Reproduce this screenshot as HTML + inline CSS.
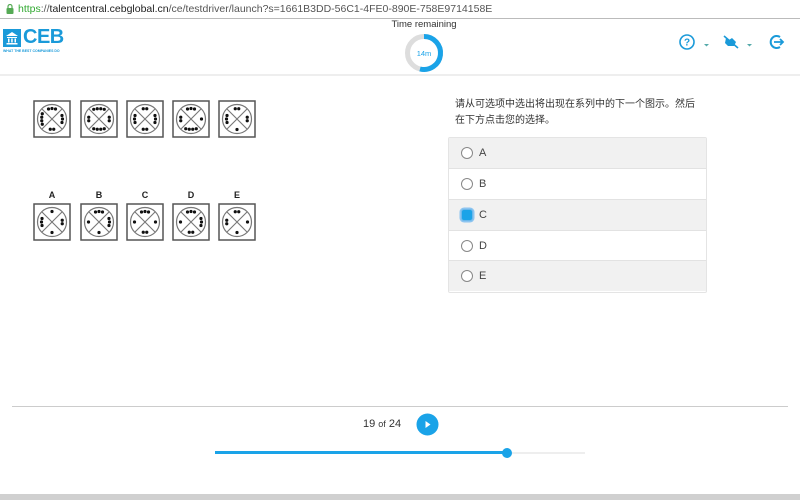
<!DOCTYPE html>
<html><head><meta charset="utf-8"><style>
body{margin:0;width:800px;height:500px;overflow:hidden;background:#fff;font-family:"Liberation Sans","Noto Sans CJK SC",sans-serif;position:relative}
.abs{position:absolute}
.opt{position:absolute;left:0;width:257px;height:30px;border-top:1px solid #e2e2e2;font-size:11px;color:#444}
.opt .r{position:absolute;left:12px;top:9px;width:10px;height:10px;border:1px solid #888;border-radius:50%;background:#fff}
.opt span{position:absolute;left:30px;top:9px}
</style></head><body>
<div class="abs" style="left:0;top:0;width:800px;height:18px;border-bottom:1px solid #bbb;background:#fff;font-size:10.5px;line-height:18px;color:#555">
<svg class="abs" style="left:6px;top:4px" width="8" height="10"><path d="M2 4V2.5a2 2 0 0 1 4 0V4" fill="none" stroke="#5a5" stroke-width="1.2"/><rect x="0.5" y="4" width="7" height="6" rx="1" fill="#5a5"/></svg>
<span class="abs" style="left:18px"><span style="color:#3a3">https</span>://<b style="color:#222;font-weight:normal">talentcentral.cebglobal.cn</b>/ce/testdriver/launch?s=1661B3DD-56C1-4FE0-890E-758E9714158E</span></div>
<div class="abs" style="left:3px;top:29px;width:18px;height:18px;background:#1a9ad9"></div>
<svg class="abs" style="left:3px;top:29px" width="18" height="18"><path d="M3 7L9 3L15 7Z M4 8h10v1H4z M5 9.5h1.5v4H5z M8.2 9.5h1.5v4H8.2z M11.5 9.5h1.5v4h-1.5z M3.5 14h11v1.5h-11z" fill="#fff"/></svg>
<div class="abs" style="left:23px;top:26px;font-size:20px;font-weight:bold;color:#1a9ad9;letter-spacing:-0.5px">CEB</div>
<div class="abs" style="left:3px;top:49px;font-size:3.5px;color:#1a9ad9;font-weight:bold">WHAT THE BEST COMPANIES DO</div>
<div class="abs" style="left:380px;top:19px;width:88px;text-align:center;font-size:9.5px;color:#333">Time remaining</div>
<svg class="abs" style="left:403px;top:32px" width="42" height="42"><circle cx="21" cy="21" r="16.5" fill="none" stroke="#ddd" stroke-width="5"/><path d="M21 4.5A16.5 16.5 0 1 1 17 37" fill="none" stroke="#1aa3e8" stroke-width="5"/><text x="21" y="24" font-size="7.5" text-anchor="middle" fill="#1aa3e8" font-family="Liberation Sans">14m</text></svg>
<svg class="abs" style="left:676px;top:32px" width="115" height="22">
<circle cx="11" cy="10" r="7" fill="none" stroke="#1a9ad9" stroke-width="1.6"/><text x="11" y="13.5" font-size="10" text-anchor="middle" fill="#1a9ad9" font-family="Liberation Sans" font-weight="bold">?</text>
<path d="M28 12h5l-2.5 2.5z" fill="#5aa"/>
<path d="M50 6l3 2 3-2 4 4-2 4h-6l-3-3z" fill="#1a9ad9"/><path d="M48 4l14 12" stroke="#1a9ad9" stroke-width="1.6"/>
<path d="M71 12h5l-2.5 2.5z" fill="#5aa"/>
<path d="M104 5a6 6 0 1 0 0 10" fill="none" stroke="#1a9ad9" stroke-width="2"/><path d="M98 10h8M104 7l3 3-3 3" fill="none" stroke="#1a9ad9" stroke-width="1.8"/>
</svg>
<div class="abs" style="left:0;top:74px;width:800px;height:2px;background:#eee"></div>
<div id="figs"></div>
<div class="abs" style="left:455px;top:97px;font-size:10px;line-height:16px;color:#333;width:250px">请从可选项中选出将出现在系列中的下一个图示。然后<br>在下方点击您的选择。</div>
<div class="abs" style="left:448px;top:137px;width:257px;height:154px;border:1px solid #e4e4e4;border-radius:2px;overflow:hidden">
<div class="opt" style="top:-1px;background:#f1f1f1"><div class="r"></div><span>A</span></div>
<div class="opt" style="top:30px;background:#fff"><div class="r"></div><span>B</span></div>
<div class="opt" style="top:61px;background:#f1f1f1"><div class="r" style="background:#1aa3e8;border-color:#6bb7ea;box-shadow:0 0 0 1.5px #8cc4f0;border-radius:3px"></div><span>C</span></div>
<div class="opt" style="top:92px;background:#fff"><div class="r"></div><span>D</span></div>
<div class="opt" style="top:122px;background:#f1f1f1"><div class="r"></div><span>E</span></div>
</div>
<div class="abs" style="left:12px;top:406px;width:776px;height:1px;background:#ccc"></div>
<div class="abs" style="left:363px;top:418px;font-size:11px;color:#333">19 <span style="font-size:9px">of</span> 24</div>
<svg class="abs" style="left:416px;top:413px" width="23" height="23"><circle cx="11.5" cy="11.5" r="11" fill="#1aa3e8"/><path d="M9.5 8v7l5-3.5z" fill="#fff"/></svg>
<div class="abs" style="left:215px;top:452px;width:370px;height:2px;background:#eee"></div>
<div class="abs" style="left:215px;top:451px;width:292px;height:3px;background:#1aa3e8"></div>
<div class="abs" style="left:502px;top:448px;width:10px;height:10px;border-radius:50%;background:#1aa3e8"></div>
<div class="abs" style="left:0;top:494px;width:800px;height:6px;background:#d0d0d0"></div>
<script>
var xs=[33,80,126,172,218];
var r1=[[3,3,2,4],[4,2,4,2],[2,3,2,3],[3,1,4,2],[2,2,1,3]];
var r2=[[1,2,1,3],[3,3,1,1],[3,1,2,1],[3,3,2,1],[2,1,1,2]];
var L=['A','B','C','D','E'];
function box(x,y,p){
 var s='<svg class="abs" style="left:'+x+'px;top:'+y+'px" width="38" height="38"><rect x="1" y="1" width="36" height="36" fill="#fff" stroke="#555" stroke-width="1.5"/><circle cx="19" cy="19" r="14.5" fill="none" stroke="#777" stroke-width="1.2"/><path d="M9 9L29 29M29 9L9 29" stroke="#777" stroke-width="1.1"/>';
 function pts(n,f){for(var i=0;i<n;i++){var o=(i-(n-1)/2)*3.5;var q=f(o);s+='<circle cx="'+q[0]+'" cy="'+q[1]+'" r="1.6" fill="#111"/>';}}
 pts(p[0],function(o){return[19+o,8.5+Math.abs(o)*0.15]});
 pts(p[1],function(o){return[29.5-Math.abs(o)*0.15,19+o]});
 pts(p[2],function(o){return[19+o,29.5-Math.abs(o)*0.15]});
 pts(p[3],function(o){return[8.5+Math.abs(o)*0.15,19+o]});
 return s+'</svg>';
}
var h='';
for(var i=0;i<5;i++){h+=box(xs[i],100,r1[i]);h+=box(xs[i],203,r2[i]);h+='<div class="abs" style="left:'+xs[i]+'px;top:190px;width:38px;text-align:center;font-size:9px;font-weight:bold;color:#222">'+L[i]+'</div>';}
document.getElementById('figs').innerHTML=h;
</script>
</body></html>
